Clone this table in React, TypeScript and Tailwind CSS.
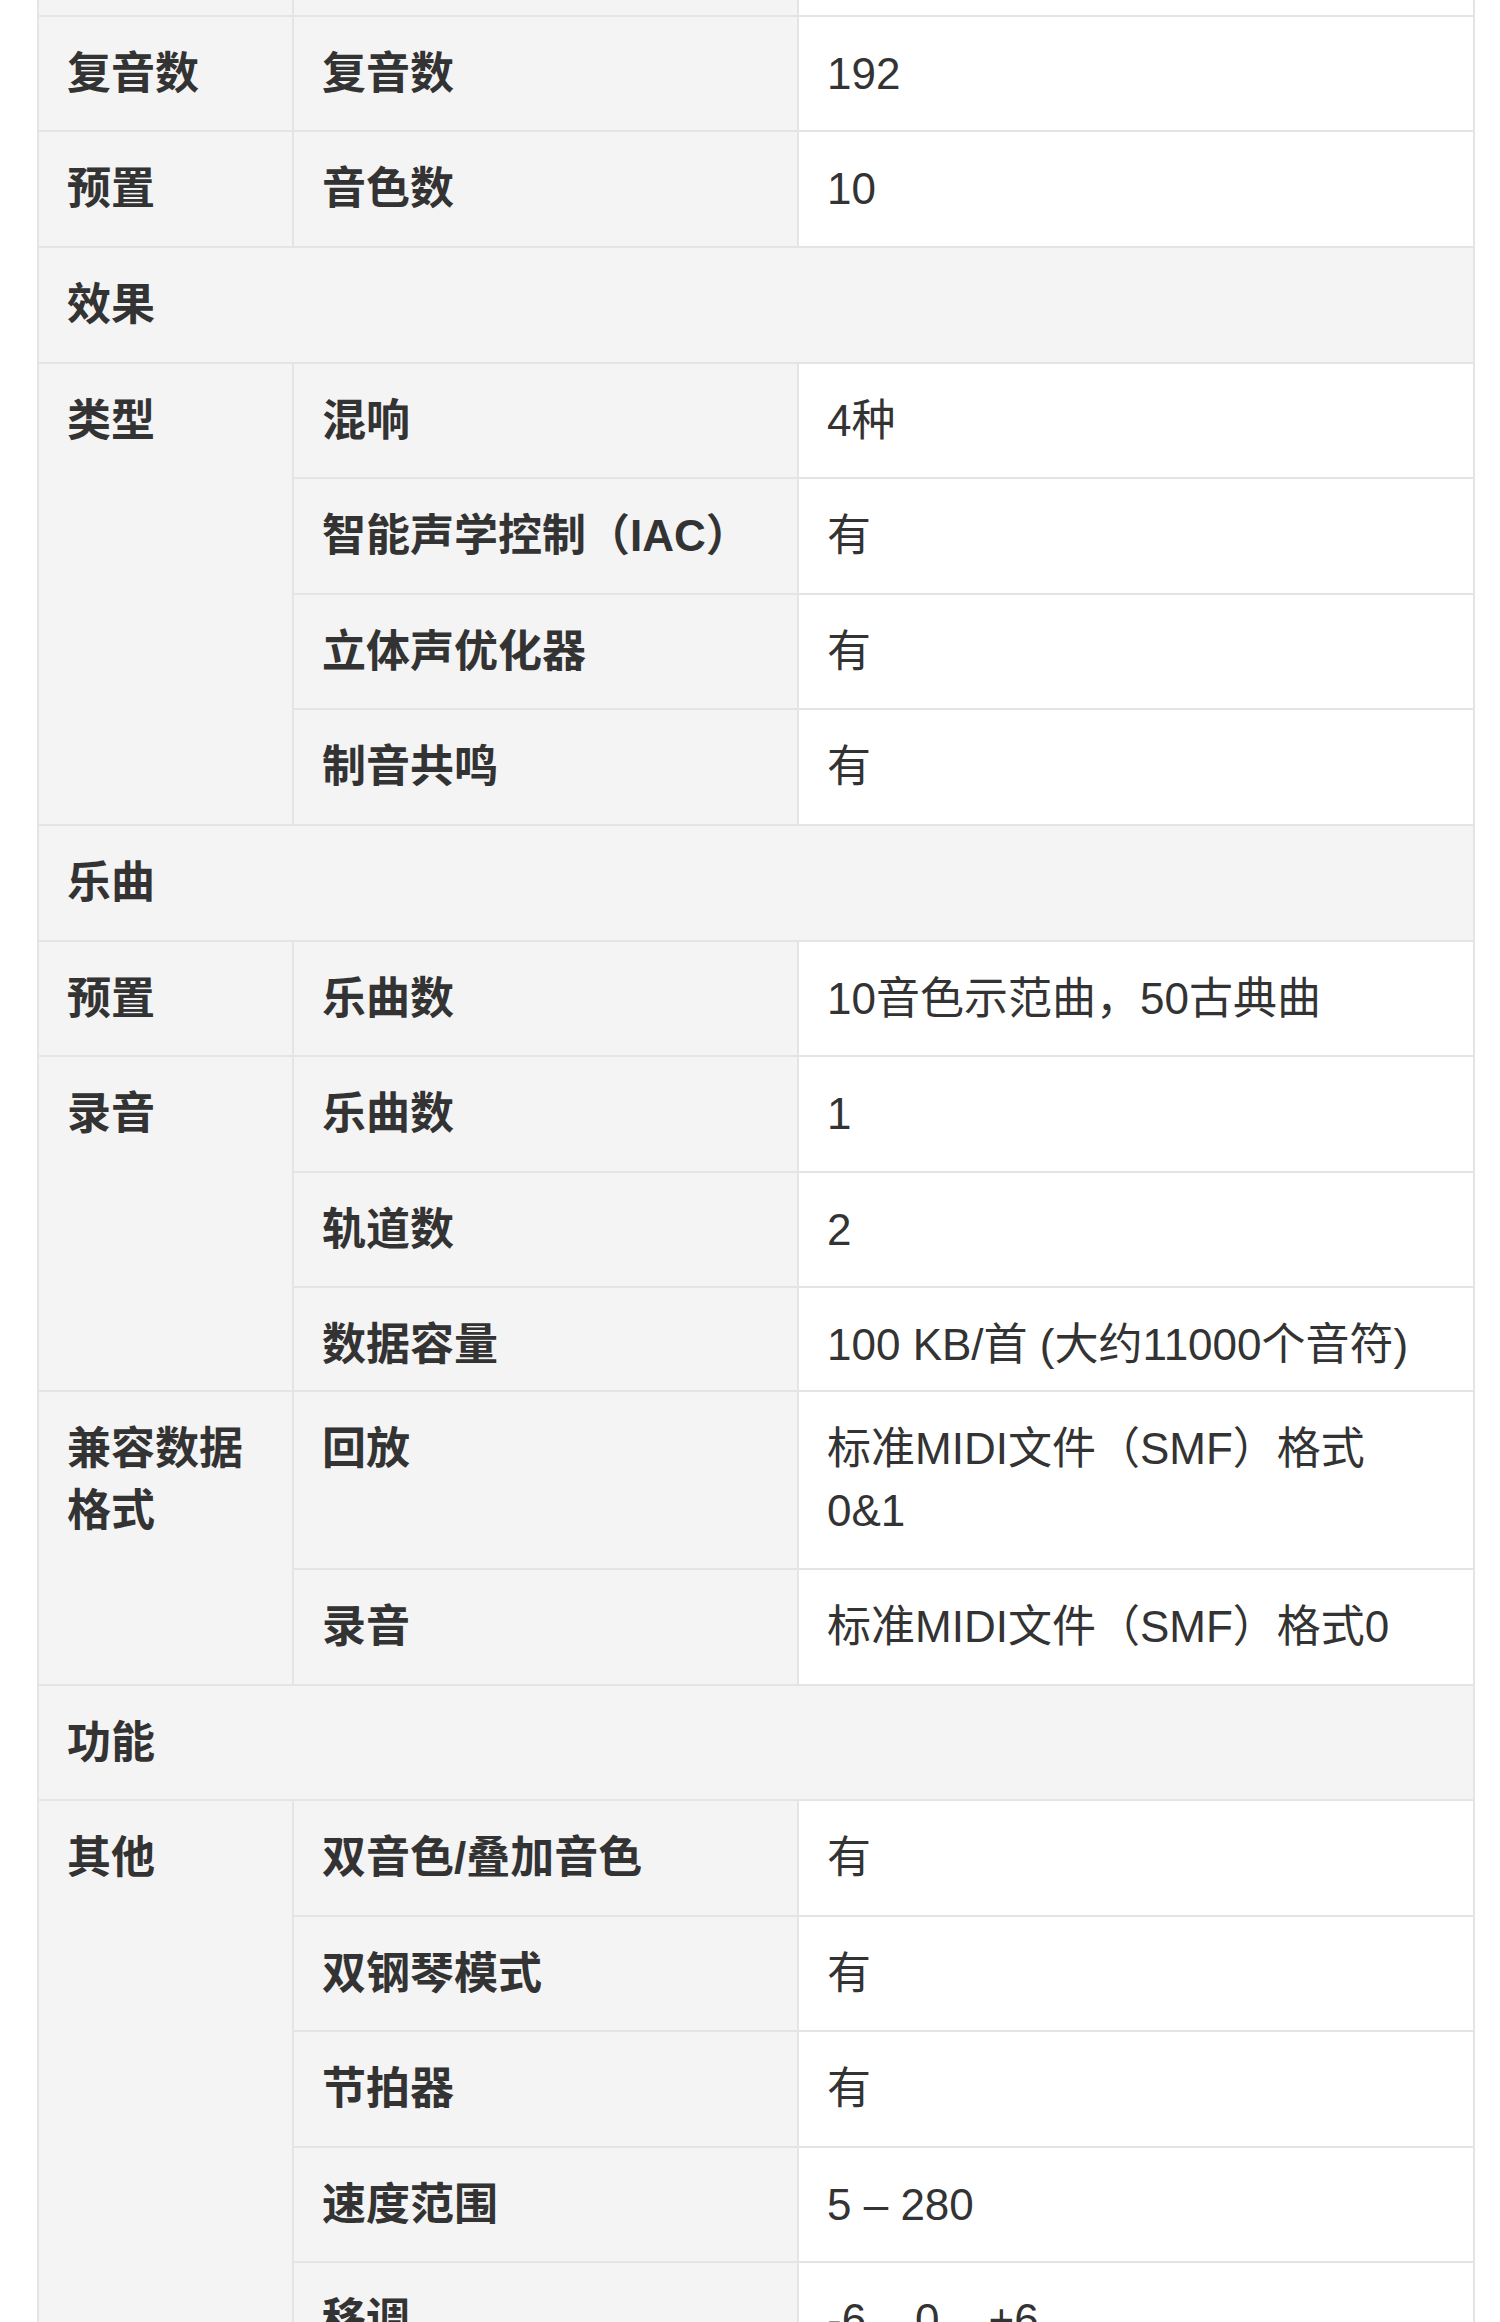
import React from "react";

type Row =
  | { kind: "header"; label: string }
  | { kind: "row"; group?: { label: string; span: number }; name: string; value: React.ReactNode; tight?: boolean };

const rows: Row[] = [
  { kind: "row", group: { label: "复音数", span: 1 }, name: "复音数", value: "192" },
  { kind: "row", group: { label: "预置", span: 1 }, name: "音色数", value: "10" },
  { kind: "header", label: "效果" },
  { kind: "row", group: { label: "类型", span: 4 }, name: "混响", value: "4种" },
  { kind: "row", name: "智能声学控制（IAC）", value: "有" },
  { kind: "row", name: "立体声优化器", value: "有" },
  { kind: "row", name: "制音共鸣", value: "有" },
  { kind: "header", label: "乐曲" },
  { kind: "row", group: { label: "预置", span: 1 }, name: "乐曲数", value: "10音色示范曲，50古典曲" },
  { kind: "row", group: { label: "录音", span: 3 }, name: "乐曲数", value: "1" },
  { kind: "row", name: "轨道数", value: "2" },
  {
    kind: "row",
    name: "数据容量",
    value: <span className="whitespace-nowrap">100 KB/首 (大约11000个音符)</span>,
    tight: true,
  },
  {
    kind: "row",
    group: { label: "兼容数据格式", span: 2 },
    name: "回放",
    value: (
      <>
        标准MIDI文件（SMF）格式
        <br />
        0&amp;1
      </>
    ),
  },
  { kind: "row", name: "录音", value: "标准MIDI文件（SMF）格式0" },
  { kind: "header", label: "功能" },
  { kind: "row", group: { label: "其他", span: 7 }, name: "双音色/叠加音色", value: "有" },
  { kind: "row", name: "双钢琴模式", value: "有" },
  { kind: "row", name: "节拍器", value: "有" },
  { kind: "row", name: "速度范围", value: "5 – 280" },
  { kind: "row", name: "移调", value: "-6 – 0 – +6" },
  { kind: "row", name: "调律", value: "414.8 – 440.0 – 466.8 Hz" },
  { kind: "row", name: "音阶类型", value: "7种" },
];

const cellBase = "border-2 border-[#e4e4e4] align-top pl-[28px] pr-[20px] pt-[26px] leading-[62px]";

export default function App() {
  return (
    <div
      className="h-[2322px] w-[1500px] overflow-hidden bg-white text-[44px] text-[#333333]"
      style={{ fontFamily: '"Liberation Sans", "Noto Sans CJK SC", sans-serif' }}
    >
      <table className="-mt-[100.8px] ml-[37px] w-[1436px] table-fixed border-collapse">
        <colgroup>
          <col className="w-[255px]" />
          <col className="w-[505px]" />
          <col className="w-[676px]" />
        </colgroup>
        <tbody>
          <tr>
            <td className={`${cellBase} pb-[25.6px] bg-[#f4f4f4] font-semibold`}>&nbsp;</td>
            <td className={`${cellBase} pb-[25.6px] bg-[#f4f4f4] font-semibold`}>&nbsp;</td>
            <td className={`${cellBase} pb-[25.6px] bg-white`}>&nbsp;</td>
          </tr>
          {rows.map((r, i) => {
            if (r.kind === "header") {
              return (
                <tr key={i}>
                  <td colSpan={3} className={`${cellBase} pb-[25.6px] bg-[#f4f4f4] font-semibold`}>
                    {r.label}
                  </td>
                </tr>
              );
            }
            const pb = r.tight ? "pb-[14px]" : "pb-[25.6px]";
            return (
              <tr key={i}>
                {r.group && (
                  <td rowSpan={r.group.span} className={`${cellBase} pb-[25.6px] bg-[#f4f4f4] font-semibold`}>
                    {r.group.label}
                  </td>
                )}
                <td className={`${cellBase} ${pb} bg-[#f4f4f4] font-semibold`}>{r.name}</td>
                <td className={`${cellBase} ${pb} bg-white`}>{r.value}</td>
              </tr>
            );
          })}
        </tbody>
      </table>
    </div>
  );
}
